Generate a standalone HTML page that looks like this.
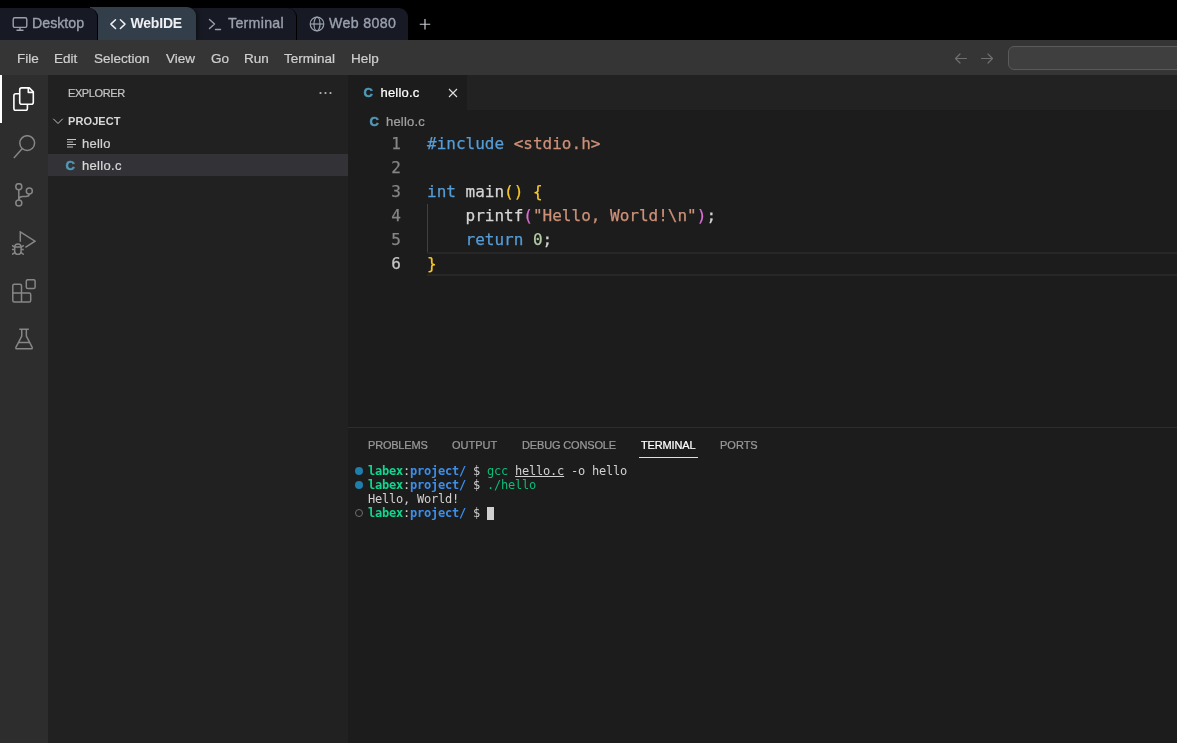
<!DOCTYPE html>
<html lang="en">
<head>
<meta charset="utf-8">
<title>WebIDE</title>
<style>
*{box-sizing:border-box;margin:0;padding:0}
html,body{width:1177px;height:743px;overflow:hidden;background:#1e1e1e}
body{position:relative;font-family:"Liberation Sans","DejaVu Sans",sans-serif;color:#ccc;-webkit-font-smoothing:antialiased}
.abs{position:absolute}
.t{position:absolute;white-space:nowrap;line-height:1;-webkit-text-stroke:.22px}
#topbar,#menubar,#activity,#sidebar,#editor,#panel{will-change:transform}
/* top bar */
#topbar{left:0;top:0;width:1177px;height:40px;background:#000}
.vtab{position:absolute;top:8px;height:32px;background:#171a25;border-radius:0 9px 0 0;border-right:1px solid #000}
.vtab .t{font-size:14.2px;color:#9aa0ad;top:8px;-webkit-text-stroke:.35px #9aa0ad}
.vtab.active{background:#333e4b;top:7px;height:33px;border-radius:0 9px 0 0;border-right:0;box-shadow:2px 1px 4px rgba(0,0,0,.45)}
.vtab.active .t{color:#eef0f3;top:9px;-webkit-text-stroke:0;font-size:14px;letter-spacing:-.2px}
/* menubar */
#menubar{left:0;top:40px;width:1177px;height:35px;background:#353535}
#menubar .t{font-size:13.5px;color:#cfcfcf;top:12px}
/* activity bar */
#activity{left:0;top:75px;width:48px;height:668px;background:#2d2d2d}
/* sidebar */
#sidebar{left:48px;top:75px;width:300px;height:668px;background:#212121}
/* editor */
#editor{left:348px;top:75px;width:829px;height:352px;background:#1c1c1c}
#tabbar{left:0;top:0;width:829px;height:35px;background:#222222}
#etab{left:0;top:0;width:119px;height:35px;background:#1c1c1c}
.mono{font-family:"DejaVu Sans Mono","Liberation Mono",monospace}
.code{position:absolute;left:79px;-webkit-text-stroke:.25px;font-size:16px;line-height:24px;height:24px;white-space:pre;color:#d4d4d4}
.ln{position:absolute;left:0;width:53px;-webkit-text-stroke:.25px;text-align:right;font-size:16px;line-height:24px;height:24px;color:#858585}
/* panel */
#panel{left:348px;top:427px;width:829px;height:316px;background:#1c1c1c;border-top:1px solid #2d2d2d}
#panel .pt{font-size:11px;color:#9a9a9a;top:12px;letter-spacing:0}
.term{position:absolute;left:20px;font-size:12px;line-height:14px;height:14px;white-space:pre;color:#d0d0d0;letter-spacing:-0.224px}
.g{color:#12d68e;font-weight:bold}.b{color:#3b8eea;font-weight:bold}.gn{color:#0dbc79}
</style>
</head>
<body>
<!-- ======= top bar ======= -->
<div id="topbar" class="abs">
  <div class="vtab" style="left:0;width:98px;z-index:4">
    <svg class="abs" style="left:12px;top:8px" width="16" height="16" viewBox="0 0 16 16" fill="none" stroke="#9aa0ad" stroke-width="1.4" stroke-linecap="round" stroke-linejoin="round"><rect x="1.2" y="1.8" width="13.6" height="9.6" rx="1.6"/><path d="M8 11.6v2.4M5 14.2h6"/></svg>
    <span class="t" style="left:32px">Desktop</span>
  </div>
  <div class="vtab" style="left:186px;width:111px;z-index:2">
    <svg class="abs" style="left:22px;top:8px" width="16" height="16" viewBox="0 0 16 16" fill="none" stroke="#9aa0ad" stroke-width="1.4" stroke-linecap="round" stroke-linejoin="round"><path d="M1.5 3.5l5 4.5-5 4.5M7.5 13.5h5"/></svg>
    <span class="t" style="left:42px;letter-spacing:.3px">Terminal</span>
  </div>
  <div class="vtab" style="left:287px;width:121px;z-index:1;border-right:0">
    <svg class="abs" style="left:22px;top:8px" width="16" height="16" viewBox="0 0 16 16" fill="none" stroke="#9aa0ad" stroke-width="1.2"><circle cx="8" cy="8" r="6.8"/><ellipse cx="8" cy="8" rx="3" ry="6.8"/><path d="M1.2 8h13.6"/></svg>
    <span class="t" style="left:42px;letter-spacing:.35px">Web 8080</span>
  </div>
  <div class="vtab active" style="left:90px;width:106px;z-index:3">
    <svg class="abs" style="left:19px;top:9px" width="18" height="16" viewBox="0 0 18 16" fill="none" stroke="#eef0f3" stroke-width="1.5" stroke-linecap="round" stroke-linejoin="round"><path d="M6.500 3.700L1.900 8.100 6.500 12.500M11.400 3.700L16 8.100 11.400 12.500"/></svg>
    <span class="t" style="left:40.500px;font-weight:bold">WebIDE</span>
  </div>
  <svg class="abs" style="left:418px;top:17px" width="14" height="14" viewBox="0 0 14 14" fill="none" stroke="#c8ccd4" stroke-width="1.2"><path d="M7 2v10.500M1.750 7.250h10.500"/></svg>
</div>

<!-- ======= menubar ======= -->
<div id="menubar" class="abs">
  <span class="t" style="left:17px">File</span>
  <span class="t" style="left:54px">Edit</span>
  <span class="t" style="left:94px">Selection</span>
  <span class="t" style="left:166px">View</span>
  <span class="t" style="left:211px">Go</span>
  <span class="t" style="left:244px">Run</span>
  <span class="t" style="left:284px">Terminal</span>
  <span class="t" style="left:351px">Help</span>
  <svg class="abs" style="left:953px;top:10px" width="16" height="16" viewBox="0 0 16 16" fill="none" stroke="#6f6f6f" stroke-width="1.2" stroke-linecap="round" stroke-linejoin="round"><path d="M13.500 8.500H2.700M7 4L2.500 8.500l4.500 4.500"/></svg>
  <svg class="abs" style="left:979px;top:10px" width="16" height="16" viewBox="0 0 16 16" fill="none" stroke="#6f6f6f" stroke-width="1.2" stroke-linecap="round" stroke-linejoin="round"><path d="M2.500 8.500h10.800M9 4l4.500 4.500-4.500 4.500"/></svg>
  <div class="abs" style="left:1008px;top:6px;width:200px;height:24px;background:#3f3f3f;border:1px solid #5a5a5a;border-radius:6px"></div>
</div>

<!-- ======= activity bar ======= -->
<div id="activity" class="abs">
  <div class="abs" style="left:0;top:0;width:2px;height:48px;background:#fff"></div>
  <svg class="abs" style="left:12px;top:12px" width="24" height="24" viewBox="0 0 24 24" fill="none" stroke="#fff" stroke-width="1.600" stroke-linejoin="round"><path d="M9.700 0.900H17.300L21.300 4.900V15.300a2 2 0 0 1-2 2H9.700a2 2 0 0 1-2-2V2.900a2 2 0 0 1 2-2z"/><path d="M16.300 0.900V5.400H21.300"/><path d="M7.700 6.700H3.900a2 2 0 0 0-2 2V21.400a2 2 0 0 0 2 2H13.400a2 2 0 0 0 2-2V17.300"/></svg>
  <svg class="abs" style="left:12px;top:60px" width="24" height="24" viewBox="0 0 24 24" fill="none" stroke="#868686" stroke-width="1.500"><circle cx="15.200" cy="8.100" r="7.400"/><path d="M10.300 13.600L1.900 22.900"/></svg>
  <svg class="abs" style="left:12px;top:108px" width="24" height="24" viewBox="0 0 24 24" fill="none" stroke="#868686" stroke-width="1.500"><circle cx="6.800" cy="3.700" r="3"/><circle cx="6.800" cy="20.100" r="3"/><circle cx="17.300" cy="8.100" r="3"/><path d="M6.800 6.700V17.100M17.300 11.100C17.300 12.800 15.800 13.600 13.800 13.600H11C8.500 13.600 6.800 14.900 6.800 17.100"/></svg>
  <svg class="abs" style="left:12px;top:156px" width="24" height="24" viewBox="0 0 24 24" fill="none" stroke="#868686" stroke-width="1.500"><path d="M8.300 10.700V0.900L23 10.200L13.400 16.300"/><rect x="2.700" y="13" width="6.400" height="10.400" rx="3.200"/><path d="M2.900 16H8.900M0 14.300L2.900 16.400M0 18.500H2.900M0 23.500L3.100 21.300M11.800 14.300L8.900 16.400M11.800 18.500H8.900M11.800 23.500L8.700 21.300"/></svg>
  <svg class="abs" style="left:12px;top:204px" width="24" height="24" viewBox="0 0 24 24" fill="none" stroke="#868686" stroke-width="1.500"><rect x="14.300" y="0.700" width="8.800" height="8.800" rx="1.600"/><path d="M2.300 5.300H8a1.500 1.500 0 0 1 1.500 1.500V14.100H17.200a1.500 1.500 0 0 1 1.500 1.500V21.600a1.500 1.500 0 0 1-1.500 1.500H2.300a1.500 1.500 0 0 1-1.500-1.500V6.800a1.500 1.500 0 0 1 1.500-1.500zM0.800 14.100H9.500V23.100"/></svg>
  <svg class="abs" style="left:12px;top:252px" width="24" height="24" viewBox="0 0 24 24" fill="none" stroke="#868686" stroke-width="1.500" stroke-linejoin="round"><path d="M7.300 2.200H16.800M9.750 2.200V9.200L3.900 20.300a1 1 0 0 0 .9 1.500H19.300a1 1 0 0 0 .9-1.500L14.350 9.200V2.200M6.500 15.500H17.600"/></svg>
</div>

<!-- ======= sidebar ======= -->
<div id="sidebar" class="abs">
  <span class="t" style="left:20px;top:13px;font-size:11px;color:#c4c4c4;letter-spacing:-.4px">EXPLORER</span>
  <svg class="abs" style="left:269.700px;top:15px" width="16" height="6" viewBox="0 0 16 6" fill="#b8b8b8"><circle cx="2.500" cy="3" r="1.100"/><circle cx="7.500" cy="3" r="1.100"/><circle cx="12.500" cy="3" r="1.100"/></svg>
  <svg class="abs" style="left:4px;top:40px" width="12" height="12" viewBox="0 0 12 12" fill="none" stroke="#c0c0c0" stroke-width="1"><path d="M1.300 3.800L6 8.500l4.700-4.700"/></svg>
  <span class="t" style="left:20px;top:41px;font-size:11px;font-weight:bold;color:#d8d8d8;-webkit-text-stroke:0;letter-spacing:.1px">PROJECT</span>
  <svg class="abs" style="left:19px;top:63px" width="10" height="10" viewBox="0 0 10 10" fill="none" stroke="#c4c4c4" stroke-width="1.200"><path d="M0 1.500h9M0 4h6M0 6.500h9M0 9h6"/></svg>
  <span class="t" style="left:34px;top:62px;font-size:13px;color:#d0d0d0;letter-spacing:.25px">hello</span>
  <div class="abs" style="left:0;top:79px;width:300px;height:22px;background:#323237"></div>
  <span class="t" style="left:17.500px;top:83.500px;font-size:13px;font-weight:bold;color:#519aba;-webkit-text-stroke:.5px">C</span>
  <span class="t" style="left:34px;top:84px;font-size:13px;color:#d8d8d8;letter-spacing:.3px">hello.c</span>
</div>

<!-- ======= editor ======= -->
<div id="editor" class="abs">
  <div id="tabbar" class="abs">
    <div id="etab" class="abs">
      <span class="t" style="left:15.500px;top:10.500px;font-size:13px;font-weight:bold;color:#519aba;-webkit-text-stroke:.5px">C</span>
      <span class="t" style="left:32.500px;top:11px;font-size:13px;color:#fff;letter-spacing:.2px">hello.c</span>
      <svg class="abs" style="left:99px;top:12px" width="11" height="11" viewBox="0 0 11 11" fill="none" stroke="#e0e0e0" stroke-width="1.100"><path d="M2 2l8 8M10 2l-8 8"/></svg>
    </div>
  </div>
  <span class="t" style="left:21.500px;top:39.500px;font-size:13px;font-weight:bold;color:#519aba;-webkit-text-stroke:.5px">C</span>
  <span class="t" style="left:38px;top:40px;font-size:13px;color:#a0a0a0;letter-spacing:.2px">hello.c</span>

  <div class="abs" style="left:79px;top:177px;width:750px;height:24px;border-top:2px solid #272727;border-bottom:2px solid #272727"></div>
  <div class="abs" style="left:79px;top:129px;width:1px;height:48px;background:#404040"></div>

  <div class="ln mono" style="top:57px">1</div>
  <div class="ln mono" style="top:81px">2</div>
  <div class="ln mono" style="top:105px">3</div>
  <div class="ln mono" style="top:129px">4</div>
  <div class="ln mono" style="top:153px">5</div>
  <div class="ln mono" style="top:177px;color:#c6c6c6">6</div>

  <div class="code mono" style="top:57px"><span style="color:#569cd6">#include</span> <span style="color:#ce9178">&lt;stdio.h&gt;</span></div>
  <div class="code mono" style="top:105px"><span style="color:#569cd6">int</span> main<span style="color:#f7c729">()</span> <span style="color:#f7c729">{</span></div>
  <div class="code mono" style="top:129px">    printf<span style="color:#da70d6">(</span><span style="color:#ce9178">"Hello, World!\n"</span><span style="color:#da70d6">)</span>;</div>
  <div class="code mono" style="top:153px">    <span style="color:#569cd6">return</span> <span style="color:#b5cea8">0</span>;</div>
  <div class="code mono" style="top:177px"><span style="color:#f7c729">}</span></div>
</div>

<!-- ======= panel ======= -->
<div id="panel" class="abs">
  <span class="t pt" style="left:20px;letter-spacing:-.2px">PROBLEMS</span>
  <span class="t pt" style="left:104px">OUTPUT</span>
  <span class="t pt" style="left:174px;letter-spacing:-.15px">DEBUG CONSOLE</span>
  <span class="t pt" style="left:293px;color:#fff;letter-spacing:-.15px">TERMINAL</span>
  <span class="t pt" style="left:372px">PORTS</span>
  <div class="abs" style="left:291px;top:29px;width:59px;height:1px;background:#e0e0e0"></div>

  <div class="abs" style="left:7px;top:39px;width:8px;height:8px;border-radius:50%;background:#1f7eab"></div>
  <div class="abs" style="left:7px;top:53px;width:8px;height:8px;border-radius:50%;background:#1f7eab"></div>
  <div class="abs" style="left:7px;top:81px;width:8px;height:8px;border-radius:50%;border:1.3px solid #6e6e6e"></div>

  <div class="term mono" style="top:36px"><span class="g">labex</span>:<span class="b">project/</span> $ <span class="gn">gcc</span> <span style="text-decoration:underline">hello.c</span> -o hello</div>
  <div class="term mono" style="top:50px"><span class="g">labex</span>:<span class="b">project/</span> $ <span class="gn">./hello</span></div>
  <div class="term mono" style="top:64px">Hello, World!</div>
  <div class="term mono" style="top:78px"><span class="g">labex</span>:<span class="b">project/</span> $ </div>
  <div class="abs" style="left:139px;top:79px;width:7px;height:13px;background:#d0d0d0"></div>
</div>
</body>
</html>
